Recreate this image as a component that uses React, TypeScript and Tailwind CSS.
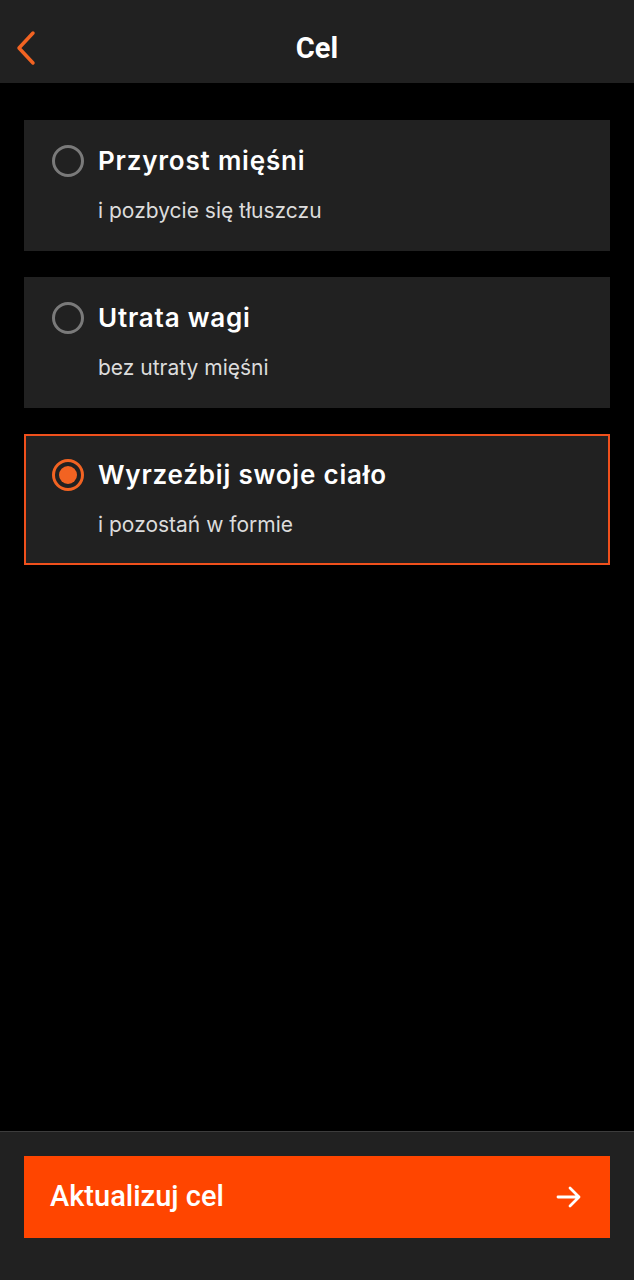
import { useState } from "react";

type Goal = {
  id: string;
  title: string;
  description: string;
};

const goals: Goal[] = [
  { id: "gain", title: "Przyrost mięśni", description: "i pozbycie się tłuszczu" },
  { id: "lose", title: "Utrata wagi", description: "bez utraty mięśni" },
  { id: "shape", title: "Wyrzeźbij swoje ciało", description: "i pozostań w formie" },
];

const App = () => {
  const [selected, setSelected] = useState("shape");

  return (
    <div className="flex flex-col h-[1280px] bg-black font-['Inter',sans-serif]">
      <div className="relative flex justify-center h-[83px] bg-[#212121] shrink-0 pt-[31px]">
        <button className="absolute left-[12px] top-[30px] cursor-pointer">
          <svg width="26" height="36" viewBox="0 0 26 36" fill="none">
            <path
              d="M21 3 L7 18 L21 33"
              stroke="#f26322"
              strokeWidth="3.5"
              strokeLinecap="round"
              strokeLinejoin="round"
            />
          </svg>
        </button>
        <h1 className="text-white text-[29px] leading-[34px] font-bold font-['Roboto',sans-serif]">Cel</h1>
      </div>

      <div className="flex-1 flex flex-col gap-[26px] px-6 pt-[37px]">
        {goals.map((goal) => {
          const active = goal.id === selected;
          return (
            <div
              key={goal.id}
              onClick={() => setSelected(goal.id)}
              className={
                active
                  ? "flex flex-col h-[131px] bg-[#212121] border-2 border-[#f0501c] pl-[26px] pt-[23px] cursor-pointer"
                  : "flex flex-col h-[131px] bg-[#212121] border-2 border-transparent pl-[26px] pt-[23px] cursor-pointer"
              }
            >
              <div className="flex items-center gap-[14px]">
                {active ? (
                  <div className="flex items-center justify-center w-[32px] h-[32px] rounded-full border-[3px] border-[#f26322]">
                    <div className="w-[18px] h-[18px] rounded-full bg-[#f26322]" />
                  </div>
                ) : (
                  <div className="w-[32px] h-[32px] rounded-full border-[3px] border-[#7a7a7a]" />
                )}
                <span className="text-white text-[26px] font-semibold tracking-[0.8px] leading-[32px]">
                  {goal.title}
                </span>
              </div>
              <span className="ml-[46px] mt-[20px] text-[#dcdcdc] text-[21px] leading-[28px]">
                {goal.description}
              </span>
            </div>
          );
        })}
      </div>

      <div className="shrink-0 h-[149px] bg-[#212121] border-t border-[#3c3c3c] px-6 pt-[24px]">
        <button className="flex items-center justify-between w-full h-[82px] bg-[#ff4500] pl-[26px] pr-[28px] cursor-pointer">
          <span className="text-white text-[29px] font-medium font-['Roboto',sans-serif]">Aktualizuj cel</span>
          <svg width="26" height="24" viewBox="0 0 26 24" fill="none">
            <path
              d="M2 12 H23 M14 3 L23 12 L14 21"
              stroke="#ffffff"
              strokeWidth="2.8"
              strokeLinecap="round"
              strokeLinejoin="round"
            />
          </svg>
        </button>
      </div>
    </div>
  );
};

export default App;
